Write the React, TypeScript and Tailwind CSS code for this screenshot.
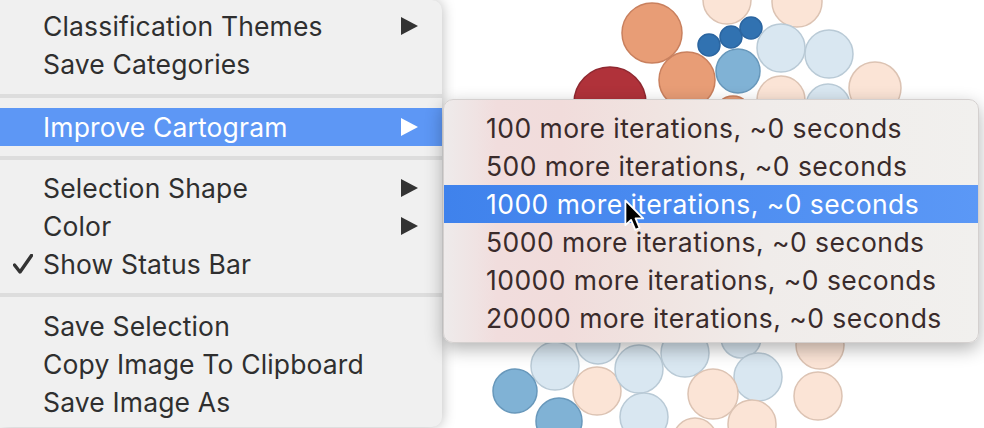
import React from 'react';

type Dot = { x: number; y: number; r: number; kind: 'red' | 'orange' | 'peach' | 'pale' | 'mid' | 'deep' };

const palette = {
    red: { fill: '#b0323a', stroke: '#8f2830' },
    orange: { fill: '#e89d76', stroke: '#c9805e' },
    peach: { fill: '#fbe4d6', stroke: '#dcc3b3' },
    pale: { fill: '#d9e7f1', stroke: '#b9cad6' },
    mid: { fill: '#80b2d5', stroke: '#6898bb' },
    deep: { fill: '#3172b1', stroke: '#2b65a0' },
};

// cartogram bubbles seen around the menus
const dots: Dot[] = [
    { x: 727, y: 0, r: 24, kind: 'peach' },
    { x: 797, y: 2, r: 25, kind: 'peach' },
    { x: 652, y: 33, r: 30, kind: 'orange' },
    { x: 687, y: 80, r: 28, kind: 'orange' },
    { x: 610, y: 103, r: 36, kind: 'red' },
    { x: 733, y: 114, r: 18, kind: 'orange' },
    { x: 738, y: 71, r: 22, kind: 'mid' },
    { x: 709, y: 45, r: 11, kind: 'deep' },
    { x: 731, y: 37, r: 11, kind: 'deep' },
    { x: 751, y: 28, r: 11, kind: 'deep' },
    { x: 781, y: 48, r: 24, kind: 'pale' },
    { x: 829, y: 54, r: 24, kind: 'pale' },
    { x: 781, y: 100, r: 24, kind: 'peach' },
    { x: 828, y: 106, r: 22, kind: 'pale' },
    { x: 875, y: 88, r: 26, kind: 'peach' },
    { x: 598, y: 342, r: 22, kind: 'pale' },
    { x: 741, y: 338, r: 20, kind: 'pale' },
    { x: 555, y: 366, r: 24, kind: 'pale' },
    { x: 515, y: 391, r: 22, kind: 'mid' },
    { x: 559, y: 421, r: 23, kind: 'mid' },
    { x: 597, y: 391, r: 24, kind: 'peach' },
    { x: 639, y: 369, r: 24, kind: 'pale' },
    { x: 644, y: 417, r: 24, kind: 'pale' },
    { x: 685, y: 353, r: 24, kind: 'pale' },
    { x: 758, y: 377, r: 24, kind: 'pale' },
    { x: 713, y: 394, r: 25, kind: 'peach' },
    { x: 752, y: 424, r: 24, kind: 'peach' },
    { x: 695, y: 440, r: 22, kind: 'peach' },
    { x: 820, y: 345, r: 24, kind: 'peach' },
    { x: 818, y: 396, r: 24, kind: 'peach' },
];

const font = { fontFamily: 'Inter, "Noto Sans", sans-serif' };

function Arrow({ white }: { white?: boolean }) {
    return (
        <svg width="18" height="18" viewBox="0 0 18 18" className="shrink-0">
            <path d="M1 0 L18 9 L1 18 Z" fill={white ? '#ffffff' : '#333333'} />
        </svg>
    );
}

function Check() {
    return (
        <svg width="20" height="20" viewBox="0 0 20 20">
            <path d="M1.5 11 L7 18 L18.5 1.5" fill="none" stroke="#333333" strokeWidth="3.4" strokeLinecap="round" strokeLinejoin="round" />
        </svg>
    );
}

function MenuRow({ label, sub, active, checked }: { label: string; sub?: boolean; active?: boolean; checked?: boolean }) {
    return (
        <div className={`flex items-center h-[38px] pr-[24px] ${active ? 'bg-[#5d97f5] text-white' : 'text-[#2f2f2f]'}`}>
            <div className="w-[43px] flex items-center justify-center pl-[2px]">{checked && <Check />}</div>
            <div className="flex-1 text-[26.5px] leading-[38px] tracking-[0.15px]">{label}</div>
            {sub && <Arrow white={active} />}
        </div>
    );
}

function Separator({ h }: { h: string }) {
    return (
        <div className={`flex items-center ${h}`}>
            <div className="w-full h-[4px] bg-[#dddddd]" />
        </div>
    );
}

function Cursor() {
    return (
        <svg width="24" height="34" viewBox="0 0 17 24" className="absolute left-[624px] top-[199px]">
            <path d="M1 1 L1 18.5 L5 14.8 L8 21.8 L11 20.5 L8.2 13.7 L13.6 13.7 Z" fill="#000000" stroke="#ffffff" strokeWidth="1.3" strokeLinejoin="round" />
        </svg>
    );
}

export default function App() {
    const iterations = ['100', '500', '1000', '5000', '10000', '20000'];

    return (
        <div className="relative w-[984px] h-[428px] overflow-hidden bg-white" style={font}>
            <svg width="984" height="428" className="absolute inset-0">
                {dots.map((d, i) => (
                    <circle key={i} cx={d.x} cy={d.y} r={d.r} fill={palette[d.kind].fill} stroke={palette[d.kind].stroke} strokeWidth="1.5" />
                ))}
            </svg>

            <div className="absolute left-0 top-0 w-[442px] h-[427px] pt-[7px] bg-[#f0f0f0] rounded-r-[10px] shadow-[0_0_14px_rgba(0,0,0,0.28)]">
                <MenuRow label="Classification Themes" sub />
                <MenuRow label="Save Categories" />
                <Separator h="h-[25px]" />
                <MenuRow label="Improve Cartogram" sub active />
                <Separator h="h-[23px]" />
                <MenuRow label="Selection Shape" sub />
                <MenuRow label="Color" sub />
                <MenuRow label="Show Status Bar" checked />
                <Separator h="h-[24px]" />
                <MenuRow label="Save Selection" />
                <MenuRow label="Copy Image To Clipboard" />
                <MenuRow label="Save Image As" />
            </div>

            <div className="absolute left-[443px] top-[99px] w-[536px] h-[244px] pt-[9px] rounded-[10px] overflow-hidden border border-[#d4d0cf] bg-[linear-gradient(90deg,#eeebeb_0%,#f1dddd_10%,#f1dcdb_22%,#f0e4e1_40%,#f0ecea_60%,#f1f0ee_100%)] shadow-[0_6px_18px_rgba(0,0,0,0.3)]">
                {iterations.map((n) => {
                    const on = n === '1000';
                    return (
                        <div key={n} className={`h-[38px] pl-[42px] text-[26.5px] leading-[38px] tracking-[0.45px] ${on ? 'bg-[linear-gradient(90deg,#3f82ec,#5b98f6)] text-white' : 'text-[#3a2b2b]'}`}>
                            {n} more iterations, ~0 seconds
                        </div>
                    );
                })}
            </div>

            <Cursor />
        </div>
    );
}
